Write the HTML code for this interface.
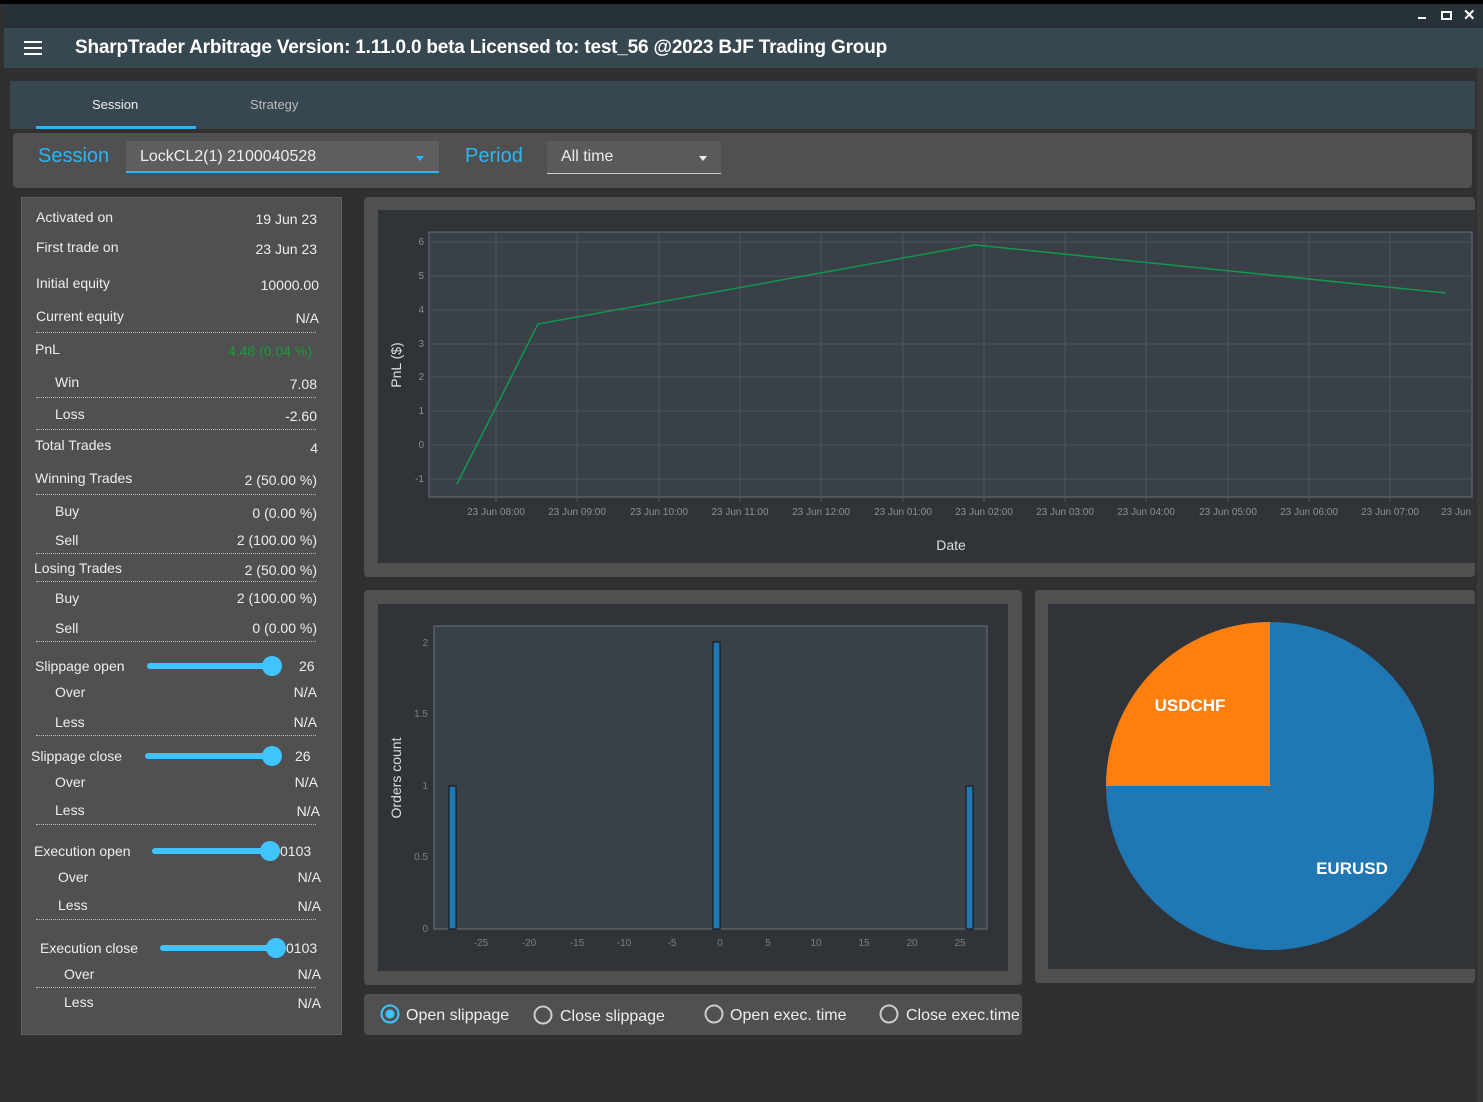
<!DOCTYPE html>
<html><head><meta charset="utf-8"><style>
*{margin:0;padding:0;box-sizing:border-box}
body{width:1483px;height:1102px;background:#303030;position:relative;overflow:hidden;font-family:"Liberation Sans",sans-serif;color:#eee}
.a{position:absolute}
.l{position:absolute;font-size:14px;color:#eee;white-space:nowrap;transform:translateY(-50%)}
.r{position:absolute;font-size:14px;color:#eee;white-space:nowrap;transform:translateY(-50%);text-align:right}
.d{position:absolute;left:36px;width:280px;border-top:1px dotted #bbb;height:0}
.sl{position:absolute;height:6px;background:#40c4ff;border-radius:3px}
.kn{position:absolute;width:20px;height:20px;border-radius:50%;background:#40c4ff}
</style></head><body>
<div class="a" style="left:0;top:0;width:1483px;height:4px;background:#000"></div>
<div class="a" style="left:4px;top:4px;width:1479px;height:24px;background:#263238"></div>
<div class="a" style="left:1418px;top:17px;width:8px;height:2px;background:#fff"></div>
<div class="a" style="left:1441px;top:11px;width:11px;height:9px;border:2px solid #fff"></div>
<div class="a" style="left:1463px;top:6px;font-size:15px;font-weight:bold;color:#fff">✕</div>
<div class="a" style="left:4px;top:28px;width:1479px;height:40px;background:#37474f"></div>
<div class="a" style="left:24px;top:41px;width:18px;height:2px;background:#fff;box-shadow:0 6px 0 #fff,0 12px 0 #fff"></div>
<div class="a" style="left:75px;top:37px;font-size:19px;color:#fff;font-weight:bold;letter-spacing:-0.2px">SharpTrader Arbitrage Version: 1.11.0.0 beta Licensed to: test_56 @2023 BJF Trading Group</div>
<div class="a" style="left:4px;top:68px;width:1475px;height:1034px;background:#303030"></div>
<div class="a" style="left:10px;top:81px;width:1465px;height:48px;background:#37474f"></div>
<div class="a" style="left:92px;top:97px;font-size:13px;color:#eee">Session</div>
<div class="a" style="left:250px;top:97px;font-size:13px;color:#bbb">Strategy</div>
<div class="a" style="left:36px;top:126px;width:160px;height:3px;background:#29b6f6"></div>
<div class="a" style="left:13px;top:133px;width:1459px;height:55px;background:#505050;border-radius:4px"></div>
<div class="a" style="left:38px;top:145px;font-size:20px;color:#29b6f6">Session</div>
<div class="a" style="left:126px;top:141px;width:313px;height:32px;background:#5e5e5e;border-bottom:2px solid #29b6f6"></div>
<div class="a" style="left:140px;top:148px;font-size:16px;color:#eee">LockCL2(1) 2100040528</div>
<div class="a" style="left:416px;top:156px;border:4px solid transparent;border-top:5px solid #29b6f6"></div>
<div class="a" style="left:465px;top:145px;font-size:20px;color:#29b6f6">Period</div>
<div class="a" style="left:547px;top:141px;width:174px;height:33px;background:#5a5a5a;border-bottom:1px solid #ccc"></div>
<div class="a" style="left:561px;top:148px;font-size:16px;color:#eee">All time</div>
<div class="a" style="left:699px;top:156px;border:4px solid transparent;border-top:5px solid #eee"></div>

<!-- left panel -->
<div class="a" style="left:21px;top:197px;width:321px;height:838px;background:#505050;border:1px solid #606060"></div>
<div class="l" style="left:36px;top:217px">Activated on</div><div class="r" style="right:1166px;top:219px">19 Jun 23</div>
<div class="l" style="left:36px;top:247px">First trade on</div><div class="r" style="right:1166px;top:249px">23 Jun 23</div>
<div class="l" style="left:36px;top:283px">Initial equity</div><div class="r" style="right:1164px;top:285px">10000.00</div>
<div class="l" style="left:36px;top:316px">Current equity</div><div class="r" style="right:1164px;top:318px">N/A</div>
<div class="d" style="top:332px"></div>
<div class="l" style="left:35px;top:349px">PnL</div><div class="r" style="right:1171px;top:351px;color:#1a9a3c">4.48 (0.04 %)</div>
<div class="l" style="left:55px;top:382px">Win</div><div class="r" style="right:1166px;top:384px">7.08</div>
<div class="d" style="top:397px"></div>
<div class="l" style="left:55px;top:414px">Loss</div><div class="r" style="right:1166px;top:416px">-2.60</div>
<div class="d" style="top:429px"></div>
<div class="l" style="left:35px;top:445px">Total Trades</div><div class="r" style="right:1165px;top:448px">4</div>
<div class="l" style="left:35px;top:478px">Winning Trades</div><div class="r" style="right:1166px;top:480px">2 (50.00 %)</div>
<div class="d" style="top:494px"></div>
<div class="l" style="left:55px;top:511px">Buy</div><div class="r" style="right:1166px;top:513px">0 (0.00 %)</div>
<div class="l" style="left:55px;top:540px">Sell</div><div class="r" style="right:1166px;top:540px">2 (100.00 %)</div>
<div class="d" style="top:553px"></div>
<div class="l" style="left:34px;top:568px">Losing Trades</div><div class="r" style="right:1166px;top:570px">2 (50.00 %)</div>
<div class="d" style="top:581px"></div>
<div class="l" style="left:55px;top:598px">Buy</div><div class="r" style="right:1166px;top:598px">2 (100.00 %)</div>
<div class="l" style="left:55px;top:628px">Sell</div><div class="r" style="right:1166px;top:628px">0 (0.00 %)</div>
<div class="d" style="top:641px"></div>
<div class="l" style="left:35px;top:666px">Slippage open</div>
<div class="sl" style="left:147px;top:663px;width:125px"></div><div class="kn" style="left:262px;top:656px"></div>
<div class="l" style="left:299px;top:666px">26</div>
<div class="l" style="left:55px;top:692px">Over</div><div class="r" style="right:1166px;top:692px">N/A</div>
<div class="l" style="left:55px;top:722px">Less</div><div class="r" style="right:1166px;top:722px">N/A</div>
<div class="d" style="top:735px"></div>
<div class="l" style="left:31px;top:756px">Slippage close</div>
<div class="sl" style="left:145px;top:753px;width:127px"></div><div class="kn" style="left:262px;top:746px"></div>
<div class="l" style="left:295px;top:756px">26</div>
<div class="l" style="left:55px;top:782px">Over</div><div class="r" style="right:1165px;top:782px">N/A</div>
<div class="l" style="left:55px;top:810px">Less</div><div class="r" style="right:1163px;top:811px">N/A</div>
<div class="d" style="top:824px"></div>
<div class="l" style="left:34px;top:851px">Execution open</div>
<div class="sl" style="left:152px;top:848px;width:118px"></div>
<div class="l" style="left:280px;top:851px">0103</div><div class="kn" style="left:260px;top:841px"></div>
<div class="l" style="left:58px;top:877px">Over</div><div class="r" style="right:1162px;top:877px">N/A</div>
<div class="l" style="left:58px;top:905px">Less</div><div class="r" style="right:1162px;top:906px">N/A</div>
<div class="d" style="top:919px"></div>
<div class="l" style="left:40px;top:948px">Execution close</div>
<div class="sl" style="left:160px;top:945px;width:116px"></div>
<div class="l" style="left:286px;top:948px">0103</div><div class="kn" style="left:266px;top:938px"></div>
<div class="l" style="left:64px;top:974px">Over</div><div class="r" style="right:1162px;top:974px">N/A</div>
<div class="d" style="top:987px"></div>
<div class="l" style="left:64px;top:1002px">Less</div><div class="r" style="right:1162px;top:1003px">N/A</div>

<!-- line chart -->
<div class="a" style="left:364px;top:197px;width:1111px;height:380px;background:#505050;border-radius:4px"></div>
<div class="a" style="left:1477px;top:68px;width:6px;height:1034px;background:#3a3a3a"></div>
<svg class="a" style="left:0;top:0" width="1483" height="1102">
<rect x="378" y="210" width="1097" height="353" fill="#303438"/>
<rect x="429" y="232" width="1043" height="265" fill="#3a4048" stroke="#6a7078"/>
<g stroke="#4f555d" stroke-width="1">
<line x1="429" x2="1472" y1="242" y2="242"/><line x1="429" x2="1472" y1="276" y2="276"/><line x1="429" x2="1472" y1="310" y2="310"/><line x1="429" x2="1472" y1="344" y2="344"/><line x1="429" x2="1472" y1="377" y2="377"/><line x1="429" x2="1472" y1="411" y2="411"/><line x1="429" x2="1472" y1="445" y2="445"/><line x1="429" x2="1472" y1="479" y2="479"/>
<line x1="496" x2="496" y1="232" y2="502"/><line x1="577" x2="577" y1="232" y2="502"/><line x1="659" x2="659" y1="232" y2="502"/><line x1="740" x2="740" y1="232" y2="502"/><line x1="821" x2="821" y1="232" y2="502"/><line x1="903" x2="903" y1="232" y2="502"/><line x1="984" x2="984" y1="232" y2="502"/><line x1="1065" x2="1065" y1="232" y2="502"/><line x1="1146" x2="1146" y1="232" y2="502"/><line x1="1228" x2="1228" y1="232" y2="502"/><line x1="1309" x2="1309" y1="232" y2="502"/><line x1="1390" x2="1390" y1="232" y2="502"/>
</g>
<polyline points="457,484 538,324 975,245 1446,293" fill="none" stroke="#0e9a4c" stroke-width="1.5"/>
<g font-family="Liberation Sans" font-size="10" fill="#8a9098" text-anchor="end">
<text x="424" y="245">6</text><text x="424" y="279">5</text><text x="424" y="313">4</text><text x="424" y="347">3</text><text x="424" y="380">2</text><text x="424" y="414">1</text><text x="424" y="448">0</text><text x="424" y="482">-1</text></g>
<g font-family="Liberation Sans" font-size="10" fill="#8a9098" text-anchor="middle">
<text x="496" y="515">23 Jun 08:00</text><text x="577" y="515">23 Jun 09:00</text><text x="659" y="515">23 Jun 10:00</text><text x="740" y="515">23 Jun 11:00</text><text x="821" y="515">23 Jun 12:00</text><text x="903" y="515">23 Jun 01:00</text><text x="984" y="515">23 Jun 02:00</text><text x="1065" y="515">23 Jun 03:00</text><text x="1146" y="515">23 Jun 04:00</text><text x="1228" y="515">23 Jun 05:00</text><text x="1309" y="515">23 Jun 06:00</text><text x="1390" y="515">23 Jun 07:00</text><text x="1456" y="515">23 Jun</text></g>
<text x="951" y="550" font-family="Liberation Sans" font-size="14" fill="#ddd" text-anchor="middle">Date</text>
<text transform="translate(401,365) rotate(-90)" font-family="Liberation Sans" font-size="14" fill="#ddd" text-anchor="middle">PnL ($)</text>

<!-- histogram -->
<rect x="364" y="590" width="658" height="395" rx="4" fill="#505050"/>
<rect x="378" y="604" width="630" height="367" fill="#303438"/>
<rect x="434" y="626" width="553" height="303" fill="#3a4048" stroke="#6a7078"/>
<g font-family="Liberation Sans" font-size="10" fill="#7a8088" text-anchor="end">
<text x="428" y="646">2</text><text x="428" y="717">1.5</text><text x="428" y="789">1</text><text x="428" y="860">0.5</text><text x="428" y="932">0</text></g>
<g font-family="Liberation Sans" font-size="10" fill="#7a8088" text-anchor="middle">
<text x="481" y="946">-25</text><text x="529" y="946">-20</text><text x="577" y="946">-15</text><text x="624" y="946">-10</text><text x="672" y="946">-5</text><text x="720" y="946">0</text><text x="768" y="946">5</text><text x="816" y="946">10</text><text x="864" y="946">15</text><text x="912" y="946">20</text><text x="960" y="946">25</text></g>
<rect x="449" y="786" width="7" height="143" fill="#1f77b4" stroke="#111"/>
<rect x="713" y="642" width="7" height="287" fill="#1f77b4" stroke="#111"/>
<rect x="966" y="786" width="7" height="143" fill="#1f77b4" stroke="#111"/>
<text transform="translate(401,778) rotate(-90)" font-family="Liberation Sans" font-size="14" fill="#ddd" text-anchor="middle">Orders count</text>

<!-- pie -->
<rect x="1035" y="590" width="440" height="393" rx="4" fill="#505050"/>
<rect x="1048" y="604" width="427" height="365" fill="#303438"/>
<circle cx="1270" cy="786" r="164" fill="#1f77b4"/>
<path d="M1270,786 L1106,786 A164,164 0 0 1 1270,622 Z" fill="#ff7f0e"/>
<text x="1190" y="711" font-family="Liberation Sans" font-size="17" font-weight="bold" fill="#fff" text-anchor="middle">USDCHF</text>
<text x="1352" y="874" font-family="Liberation Sans" font-size="17" font-weight="bold" fill="#fff" text-anchor="middle">EURUSD</text>

<!-- radios -->
<rect x="364" y="994" width="658" height="41" rx="4" fill="#505050"/>
<circle cx="390" cy="1014" r="8.5" fill="none" stroke="#40c4ff" stroke-width="2"/><circle cx="390" cy="1014" r="4.5" fill="#40c4ff"/>
<circle cx="543" cy="1015" r="8.5" fill="none" stroke="#ccc" stroke-width="2"/>
<circle cx="714" cy="1014" r="8.5" fill="none" stroke="#ccc" stroke-width="2"/>
<circle cx="889" cy="1014" r="8.5" fill="none" stroke="#ccc" stroke-width="2"/>
<g font-family="Liberation Sans" font-size="16" fill="#eee">
<text x="406" y="1020">Open slippage</text><text x="560" y="1021">Close slippage</text><text x="730" y="1020">Open exec. time</text><text x="906" y="1020">Close exec.time</text></g>
</svg>
</body></html>
